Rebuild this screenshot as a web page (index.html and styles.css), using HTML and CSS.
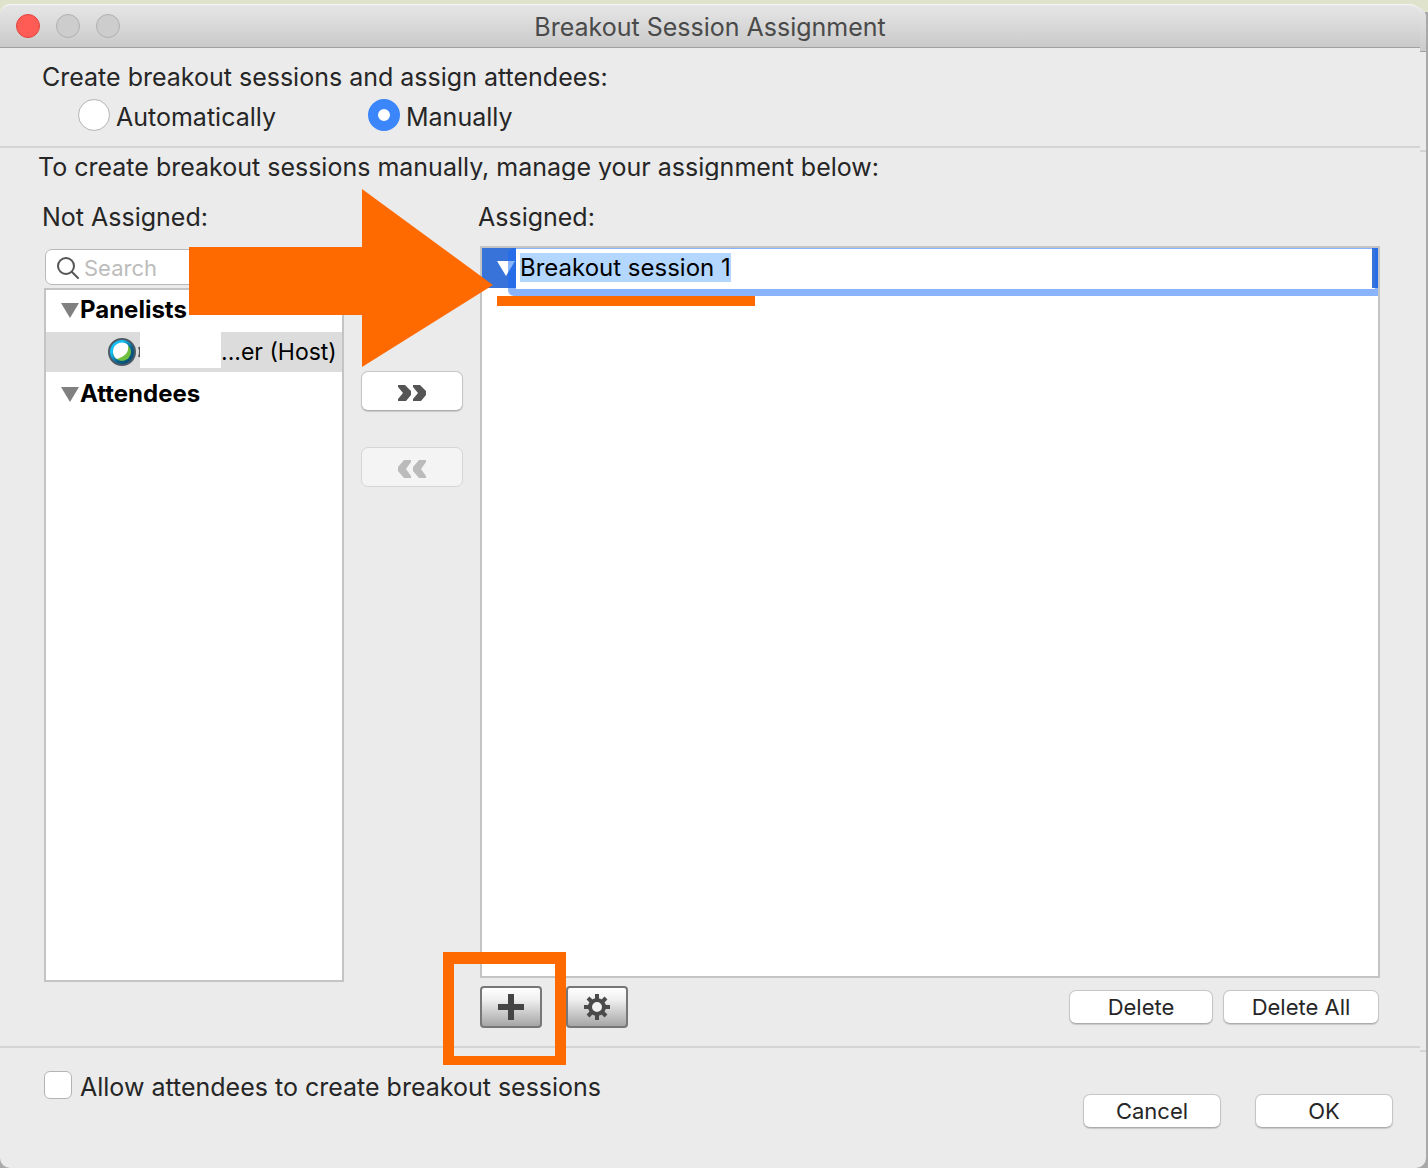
FILE: index.html
```html
<!DOCTYPE html>
<html lang="en">
<head>
    <meta charset="UTF-8">
    <meta name="viewport" content="width=device-width, initial-scale=1.0">
    <title>Breakout Session Assignment</title>
    <link rel="stylesheet" href="styles.css">
</head>
<body>
    <div class="back-window">
        <div class="back-title"></div>
        <div class="back-top"></div>
        <div class="back-middle"></div>
    </div>

    <div class="dialog">
        <header class="titlebar">
            <div class="lights">
                <button class="light light-close" aria-label="Close"></button>
                <button class="light" aria-label="Minimize" disabled></button>
                <button class="light" aria-label="Zoom" disabled></button>
            </div>
            <h1 class="title">Breakout Session Assignment</h1>
        </header>

        <section class="mode">
            <p class="text">Create breakout sessions and assign attendees:</p>
            <div class="radios">
                <label class="radio-label"><input type="radio" name="mode" class="radio">Automatically</label>
                <label class="radio-label"><input type="radio" name="mode" class="radio" checked>Manually</label>
            </div>
        </section>

        <section class="manual">
            <p class="text hint">To create breakout sessions manually, manage your assignment below:</p>
            <div class="columns">
                <div class="left">
                    <h2 class="text heading">Not Assigned:</h2>
                    <div class="search">
                        <svg width="24" height="24" viewBox="0 0 24 24" fill="none" stroke="#555" stroke-width="2">
                            <circle cx="10" cy="10" r="8"/>
                            <path d="M16 16l6 6" stroke-linecap="round"/>
                        </svg>
                        <input type="text" class="search-input" placeholder="Search" aria-label="Search">
                    </div>
                    <ul class="list">
                        <li class="row group">
                            <svg width="18" height="15" viewBox="0 0 18 15"><path d="M0 0h18L9 15z" fill="#808080"/></svg>Panelists
                        </li>
                        <li class="row person">
                            <svg width="34" height="30" viewBox="0 0 34 30">
                                <defs>
                                    <linearGradient id="ring" x1="0" y1="0" x2="1" y2="1">
                                        <stop offset="0.3" stop-color="#14c0f5"/>
                                        <stop offset="0.6" stop-color="#0a5f8c"/>
                                        <stop offset="1" stop-color="#07415f"/>
                                    </linearGradient>
                                </defs>
                                <circle cx="15" cy="15" r="13" fill="url(#ring)" stroke="#4c5b66" stroke-width="2"/>
                                <circle cx="15" cy="15" r="9" fill="#6fbf3f"/>
                                <path d="M6 14a9 9 0 0 1 15-6c1 7-2 11-11 14a9 9 0 0 1-4-8z" fill="#fff"/>
                                <path d="M32 10q2 5 0 10" fill="none" stroke="#555" stroke-width="2"/>
                            </svg>
                            <span class="mask"></span>
                            <span>...er (Host)</span>
                        </li>
                        <li class="row group">
                            <svg width="18" height="15" viewBox="0 0 18 15"><path d="M0 0h18L9 15z" fill="#808080"/></svg>Attendees
                        </li>
                    </ul>
                </div>

                <div class="middle">
                    <button class="btn move" aria-label="Assign">
                        <svg width="30" height="18" viewBox="0 0 30 18" fill="#555"><path d="M1 1h7l6 6v4l-5 6H1v-2l5-6-5-6zM16 1h7l6 6v4l-5 6h-8v-2l5-6-5-6z"/></svg>
                    </button>
                    <button class="btn move" aria-label="Unassign" disabled>
                        <svg width="30" height="20" viewBox="0 0 30 20" fill="#bbb"><path d="M14 1H7L1 8v4l6 7h7v-2l-5-7 5-7zM29 1h-7l-6 7v4l6 7h7v-2l-5-7 5-7z"/></svg>
                    </button>
                </div>

                <div class="right">
                    <h2 class="text heading">Assigned:</h2>
                    <div class="assigned">
                        <div class="session">
                            <span class="session-arrow">
                                <svg width="18" height="15" viewBox="0 0 18 15"><path d="M0 0h18L9 15z" fill="#fff"/></svg>
                            </span>
                            <input type="text" id="session" class="session-input" value="Breakout session 1" aria-label="Session name">
                            <span class="focus-ring"></span>
                        </div>
                        <span class="underline"></span>
                    </div>
                    <div class="tools">
                        <div class="add">
                            <button class="tool" aria-label="Add">
                                <svg width="26" height="26" viewBox="0 0 26 26"><path d="M13 0v26M0 13h26" stroke="#444" stroke-width="6"/></svg>
                            </button>
                            <span class="marker"></span>
                        </div>
                        <button class="tool" aria-label="Settings">
                            <svg width="26" height="26" viewBox="0 0 26 26" fill="none" stroke="#4a4a4a">
                                <circle cx="13" cy="13" r="5" fill="#f2f2f2" stroke="none"/>
                                <circle cx="13" cy="13" r="7" stroke-width="4"/>
                                <path d="M13 0v6M13 20v6M0 13h6M20 13h6M4 4l4 4M18 18l4 4M22 4l-4 4M8 18l-4 4" stroke-width="4"/>
                            </svg>
                        </button>
                        <button class="btn delete">Delete</button>
                        <button class="btn delete-all">Delete All</button>
                    </div>
                </div>

                <svg class="arrow" width="304" height="178" viewBox="0 0 304 178">
                    <path d="M0 58h173V0l131 96-131 82v-52H0z" fill="#ff6a00"/>
                </svg>
            </div>
        </section>

        <footer class="footer">
            <label class="allow"><input type="checkbox" class="checkbox">Allow attendees to create breakout sessions</label>
            <div class="actions">
                <button class="btn action">Cancel</button>
                <button class="btn action">OK</button>
            </div>
        </footer>
    </div>

    <script>
        document.querySelector("#session").select();
    </script>
</body>
</html>
```
FILE: styles.css
```css
* {
    box-sizing: border-box;
}

body {
    margin: 0;
    min-height: 100vh;
    padding: 4px 8px 0 0;
    position: relative;
    display: flex;
    font-family: Inter, "Liberation Sans", sans-serif;
    font-size: 24px;
    color: #262626;
    background: linear-gradient(#dfe3cb 12px, #a9a9a9 12px);
}

h1, h2, p, ul {
    margin: 0;
    padding: 0;
    font-weight: normal;
}

button, input {
    font-family: inherit;
    color: inherit;
    margin: 0;
    padding: 0;
}

svg {
    display: block;
    flex: none;
}

/* window behind the dialog */
.back-window {
    position: absolute;
    top: 6px;
    right: 2px;
    bottom: 0;
    width: 40px;
    display: flex;
    flex-direction: column;
    background: #ebebeb;
    border-radius: 0 12px 10px 0;
    overflow: hidden;
}

.back-title {
    height: 46px;
    background: linear-gradient(#e6e6e6, #cbcbcb);
    border-bottom: 1px solid #a0a0a0;
}

.back-top {
    height: 100px;
    border-bottom: 2px solid #d4d4d4;
}

.back-middle {
    height: 900px;
    border-bottom: 2px solid #d4d4d4;
}

.dialog {
    position: relative;
    flex: 1;
    display: flex;
    flex-direction: column;
    background: #ebebeb;
    border-radius: 10px;
}

.titlebar {
    position: relative;
    height: 44px;
    display: flex;
    align-items: center;
    background: linear-gradient(#e6e6e6, #cacaca);
    border-top: 1px solid #f5f5f5;
    border-bottom: 1px solid #a0a0a0;
    border-radius: 10px 10px 0 0;
}

.lights {
    position: absolute;
    left: 16px;
    display: flex;
    gap: 16px;
}

.light {
    width: 24px;
    height: 24px;
    border: 1px solid #b0b0b0;
    border-radius: 50%;
    background: #cdcdcd;
}

.light-close {
    background: #ff5c55;
    border-color: #e0443e;
}

.title {
    flex: 1;
    padding-top: 2px;
    text-align: center;
    font-size: 25px;
    line-height: 32px;
    color: #4a4a4a;
}

.text {
    font-size: 25px;
    line-height: 32px;
}

.mode {
    padding: 13px 42px 11px;
    border-bottom: 2px solid #d4d4d4;
}

.radios {
    display: flex;
    padding: 6px 0 0 36px;
}

.radio-label {
    width: 290px;
    display: flex;
    align-items: flex-start;
    gap: 6px;
    font-size: 25px;
    line-height: 36px;
}

.radio {
    appearance: none;
    width: 32px;
    height: 32px;
    border: 1px solid #b4b4b4;
    border-radius: 50%;
    background: #fff;
}

.radio:checked {
    border: 10px solid #3b86fb;
}

.manual {
    flex: 1;
    display: flex;
    flex-direction: column;
    padding: 3px 40px 18px 38px;
    border-bottom: 2px solid #d4d4d4;
}

.hint {
    height: 29px;
    overflow: hidden;
}

.columns {
    position: relative;
    flex: 1;
    display: flex;
    padding: 21px 0 0 6px;
}

.left {
    width: 300px;
    display: flex;
    flex-direction: column;
    margin-bottom: 46px;
}

.heading {
    margin-left: -2px;
}

.search {
    display: flex;
    align-items: center;
    gap: 4px;
    height: 36px;
    margin: 16px 1px 3px;
    padding: 2px 0 0 10px;
    background: #fff;
    border: 1px solid #b9b9b9;
    border-radius: 7px;
}

.search-input {
    flex: 1;
    min-width: 0;
    border: none;
    outline: none;
    background: none;
    font-size: 22px;
}

.search-input::placeholder {
    color: #bcbcbc;
}

.list {
    flex: 1;
    display: flex;
    flex-direction: column;
    gap: 2px;
    list-style: none;
    color: #000;
    background: #fff;
    border: 2px solid #c4c4c4;
}

.row {
    display: flex;
    align-items: center;
    height: 40px;
    line-height: 32px;
}

.group {
    gap: 1px;
    padding-left: 15px;
    font-weight: bold;
}

.person {
    padding-left: 61px;
    font-size: 23px;
    background: #dcdcdc;
}

.mask {
    align-self: flex-start;
    width: 81px;
    height: 36px;
    margin-left: -1px;
    background: #fff;
}

.middle {
    display: flex;
    flex-direction: column;
    gap: 36px;
    margin: 0 17px;
    padding-top: 170px;
}

.btn {
    display: flex;
    align-items: center;
    justify-content: center;
    height: 34px;
    font-size: 22px;
    background: #fff;
    border: 1px solid #c6c6c6;
    border-bottom-color: #adadad;
    border-radius: 7px;
    box-shadow: 0 1px 1px rgba(0, 0, 0, 0.15);
}

.move {
    width: 102px;
    height: 40px;
    padding-top: 4px;
}

.move:disabled {
    background: #f4f4f4;
    border-color: #d6d6d6;
    box-shadow: none;
}

.right {
    flex: 1;
    display: flex;
    flex-direction: column;
}

.assigned {
    position: relative;
    flex: 1;
    margin-top: 13px;
    background: #fff;
    border: 2px solid #c4c4c4;
}

.session {
    position: relative;
    display: flex;
    height: 40px;
    padding-right: 6px;
    background: #3873d9;
}

.session-arrow {
    width: 34px;
    padding: 13px 0 0 15px;
}

.session-input {
    flex: 1;
    min-width: 0;
    height: 41px;
    padding: 0 4px 2px;
    border: none;
    outline: none;
    font-size: 24px;
    line-height: 32px;
    color: #000;
    background: #fff;
}

.session-input::selection {
    color: #000;
    background: #b3d7ff;
}

/* ring round the name being edited */
.focus-ring {
    position: absolute;
    top: 0;
    left: 26px;
    right: 0;
    height: 48px;
    border: solid rgba(20, 103, 246, 0.5);
    border-width: 1px 3px 7px 8px;
    border-radius: 6px 0 0 6px;
    pointer-events: none;
}

.underline {
    position: absolute;
    left: 15px;
    top: 48px;
    width: 258px;
    height: 10px;
    background: #ff6a00;
}

.tools {
    display: flex;
    align-items: center;
    padding: 8px 1px 0 0;
}

.add {
    position: relative;
    margin-right: 24px;
}

.marker {
    position: absolute;
    left: -37px;
    top: -34px;
    width: 123px;
    height: 113px;
    border: solid #ff6a00;
    border-width: 12px 11px 9px;
    pointer-events: none;
}

.tool {
    display: flex;
    align-items: center;
    justify-content: center;
    width: 62px;
    height: 42px;
    background: linear-gradient(#fff, #f0f0f0 30%, #a6a6a6);
    border: 2px solid #777;
    border-radius: 4px;
}

.delete {
    width: 144px;
    margin-left: auto;
}

.delete-all {
    width: 156px;
    margin-left: 10px;
}

.arrow {
    position: absolute;
    left: 151px;
    top: 9px;
    pointer-events: none;
}

.footer {
    display: flex;
    justify-content: space-between;
    align-items: flex-start;
    height: 120px;
    padding: 23px 27px 0 44px;
}

.allow {
    display: flex;
    align-items: flex-start;
    gap: 8px;
    font-size: 25px;
    line-height: 32px;
}

.checkbox {
    appearance: none;
    width: 28px;
    height: 28px;
    border: 1px solid #b4b4b4;
    border-radius: 6px;
    background: #fff;
}

.actions {
    display: flex;
    gap: 34px;
    padding-top: 23px;
}

.action {
    width: 138px;
}
```
